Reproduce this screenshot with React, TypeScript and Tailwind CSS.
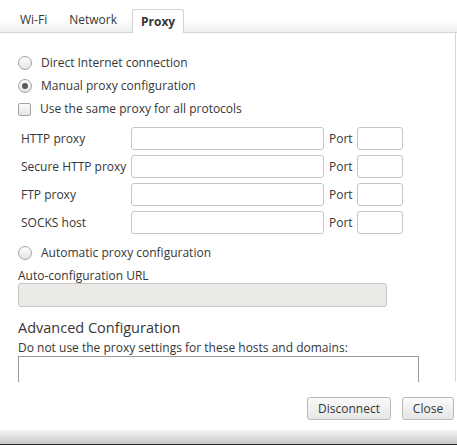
import React from 'react';

const Radio = ({ checked = false }: { checked?: boolean }) => (
  <span className="w-[14px] h-[14px] rounded-full border border-[#a3a3a3] bg-gradient-to-b from-[#fdfdfd] to-[#e4e4e4] flex items-center justify-center shrink-0">
    {checked && <span className="w-[6px] h-[6px] rounded-full bg-[#5a5a5a]" />}
  </span>
);

const proxyRows = ['HTTP proxy', 'Secure HTTP proxy', 'FTP proxy', 'SOCKS host'];

export default function App() {
  return (
    <div
      className="w-[457px] h-[445px] bg-white flex flex-col overflow-hidden text-[12px] text-[#363636]"
      style={{ fontFamily: '"Open Sans", "Noto Sans", sans-serif' }}
    >
      {/* Tabs */}
      <div className="h-[33px] shrink-0 flex items-end pl-[20px] border-b border-[#d3d3d3] bg-gradient-to-b from-white from-60% to-[#eeeeee]">
        <span className="pb-[3px] leading-[18px]">Wi-Fi</span>
        <span className="pb-[3px] ml-[22px] leading-[18px]">Network</span>
        <span className="ml-[15px] h-[24px] px-[8px] -mb-px bg-white border border-b-0 border-[#d3d3d3] rounded-t-[3px] font-bold leading-[23px]">
          Proxy
        </span>
      </div>

      {/* Proxy page */}
      <div className="h-[349px] shrink-0 overflow-hidden border-r border-[#d6d6d6] mr-[1px] pl-[18px]">
        <div className="flex items-center gap-[9px] mt-[22px] h-[16px]">
          <Radio />
          <span>Direct Internet connection</span>
        </div>
        <div className="flex items-center gap-[9px] mt-[7px] h-[16px]">
          <Radio checked />
          <span>Manual proxy configuration</span>
        </div>
        <div className="flex items-center gap-[9px] mt-[7px] h-[16px]">
          <span className="w-[13px] h-[13px] rounded-[2px] border border-[#a3a3a3] bg-gradient-to-b from-[#fdfdfd] to-[#e4e4e4] shrink-0" />
          <span>Use the same proxy for all protocols</span>
        </div>

        <div className="mt-[10px] flex flex-col gap-[5px]">
          {proxyRows.map((label) => (
            <div key={label} className="flex items-center h-[23px]">
              <span className="w-[113px] pl-[3px] whitespace-nowrap">{label}</span>
              <span className="w-[193px] h-[23px] border border-[#c6c6c6] rounded-[3px] bg-white" />
              <span className="ml-[5px] w-[28px]">Port</span>
              <span className="w-[46px] h-[23px] border border-[#c6c6c6] rounded-[3px] bg-white" />
            </div>
          ))}
        </div>

        <div className="flex items-center gap-[9px] mt-[11px] h-[16px]">
          <Radio />
          <span>Automatic proxy configuration</span>
        </div>
        <div className="mt-[7px] leading-[15px]">Auto-configuration URL</div>
        <div className="w-[369px] h-[24px] border border-[#c6c6c6] rounded-[3px] bg-[#ebeae6]" />

        <div className="mt-[11px] text-[14.5px] leading-[20px]">Advanced Configuration</div>
        <div className="mt-[2px] leading-[15px]">Do not use the proxy settings for these hosts and domains:</div>
        <div className="mt-[1px] w-[401px] h-[40px] border border-[#9a9a9a]" />
      </div>

      {/* Buttons */}
      <div className="h-[48px] shrink-0 flex items-start justify-end gap-[11px] pr-[3px] pt-[15px]">
        <button className="w-[84px] h-[23px] border border-[#b9b9b9] rounded-[3px] bg-gradient-to-b from-[#fafafa] to-[#e6e6e6] text-[#363636] leading-none">
          Disconnect
        </button>
        <button className="w-[52px] h-[23px] border border-[#b9b9b9] rounded-[3px] bg-gradient-to-b from-[#fafafa] to-[#e6e6e6] text-[#363636] leading-none">
          Close
        </button>
      </div>
      <div className="h-[14px] shrink-0 bg-gradient-to-b from-[#f6f6f6] to-[#c9c9c9]" />
      <div className="h-px shrink-0 bg-[#2a2a2a]" />
    </div>
  );
}
